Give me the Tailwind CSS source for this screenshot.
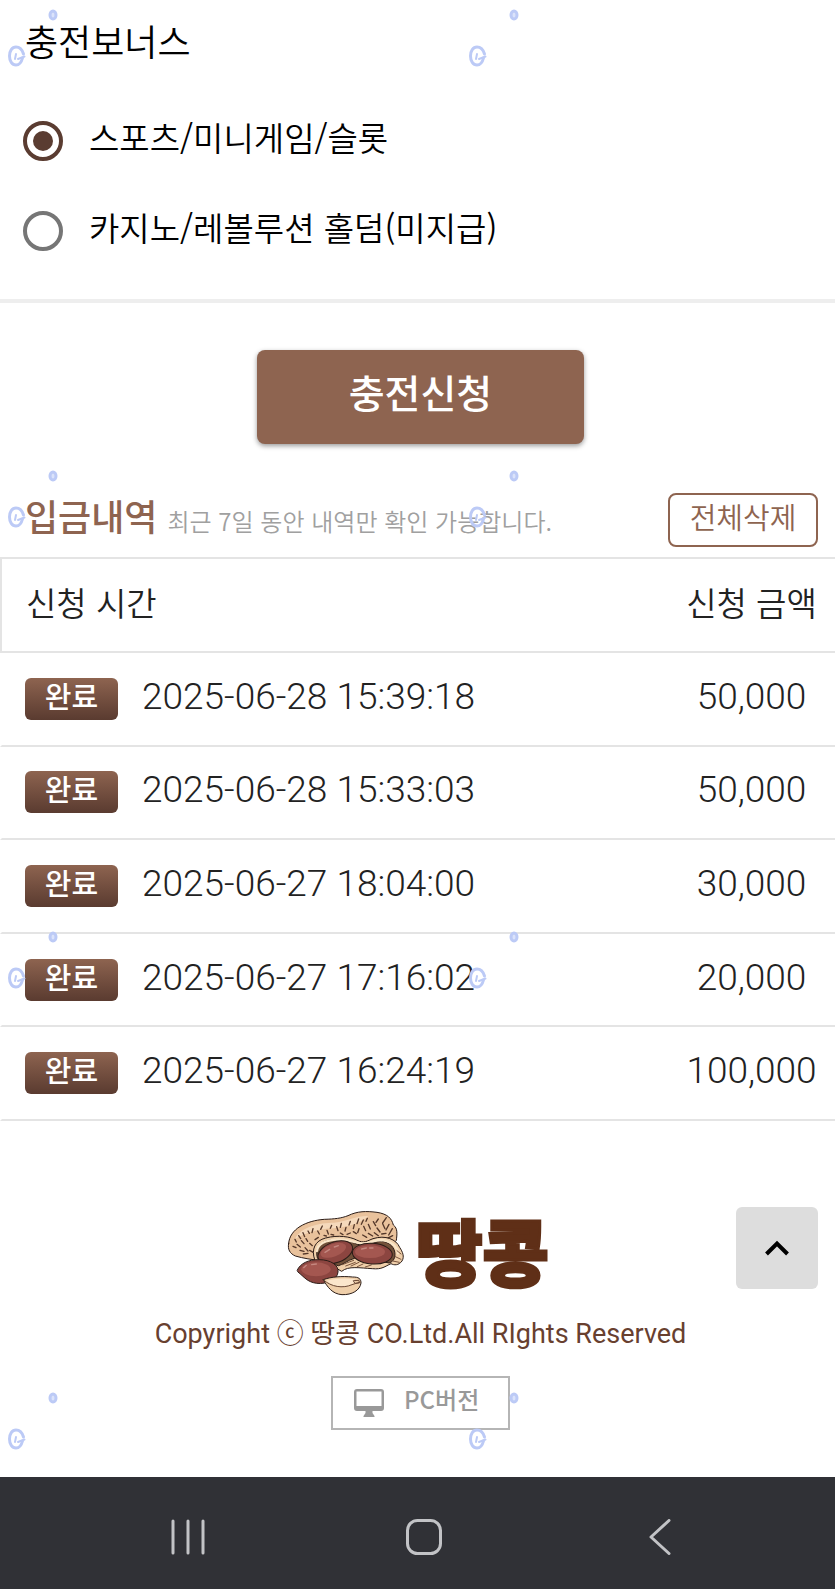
<!DOCTYPE html>
<html lang="ko">
<head>
<meta charset="utf-8">
<meta name="viewport" content="width=device-width, initial-scale=1">
<title>충전신청</title>
<script src="https://cdn.jsdelivr.net/npm/@tailwindcss/browser@4"></script>
</head>
<body class="relative flex min-h-screen flex-col bg-white font-['Noto_Sans_CJK_KR',sans-serif] text-black">
<main class="flex-1">
  <form>
    <fieldset class="border-b-4 border-[#eeeeee] pb-[23px] pt-4">
      <legend class="contents"><span class="mb-8 block px-[25px] text-[36px] font-[350] leading-[48px]">충전보너스</span></legend>
      <label class="flex h-[90px] items-center gap-[26px] px-[23px]">
        <input type="radio" name="bonus" checked class="size-10 shrink-0 appearance-none rounded-full border-4 border-[#767676] bg-clip-content p-[6px] checked:border-[#5a3c31] checked:bg-[#5a3c31]">
        <span class="pb-2 text-[33px] font-[350] leading-[44px]">스포츠/미니게임/슬롯</span>
      </label>
      <label class="flex h-[90px] items-center gap-[26px] px-[23px]">
        <input type="radio" name="bonus" class="size-10 shrink-0 appearance-none rounded-full border-4 border-[#767676] bg-clip-content p-[6px] checked:border-[#5a3c31] checked:bg-[#5a3c31]">
        <span class="pb-2 text-[33px] font-[350] leading-[44px]">카지노/레볼루션 홀덤(미지급)</span>
      </label>
    </fieldset>
    <div class="flex justify-center pb-[49px] pl-[6px] pt-[47px]">
      <button type="submit" class="h-[94px] w-[327px] rounded-lg bg-[#8e6450] pb-3 text-[39px] font-medium text-white shadow-[0_2px_5px_rgba(0,0,0,0.4)]">충전신청</button>
    </div>
  </form>

  <section>
    <div class="flex items-center justify-between pb-[10px] pl-[25px] pr-[17px]">
      <div class="flex items-baseline gap-[10px] pb-2">
        <h2 class="text-[36px] font-medium leading-[45px] text-[#8e6450]">입금내역</h2>
        <p class="text-[24px] font-[350] text-[#a0a0a0]">최근 7일 동안 내역만 확인 가능합니다.</p>
      </div>
      <button type="button" class="h-[54px] w-[150px] rounded-lg border-2 border-[#8e6450] pb-2 text-[29px] font-[350] leading-[40px] text-[#8e6450]">전체삭제</button>
    </div>
    <table class="h-[564px] w-full border-separate border-spacing-0 text-[#222222]">
      <thead>
        <tr class="h-[96px]">
          <th scope="col" class="border-y-2 border-l-2 border-[#e4e4e4] pb-1 pl-6 text-left text-[33px] font-[350]">신청 시간</th>
          <th scope="col" class="w-[167px] border-y-2 border-[#e4e4e4] pb-1 text-center text-[33px] font-[350]">신청 금액</th>
        </tr>
      </thead>
      <tbody class="font-[Roboto,'Noto_Sans_CJK_KR',sans-serif] text-[37px] font-light leading-[44px]">
        <tr>
          <td class="border-b-2 border-l-2 border-b-[#e4e4e4] border-l-transparent p-0 pl-[23px]"><div class="flex items-center gap-6"><span class="flex h-[42px] w-[93px] justify-center rounded-md bg-linear-to-b from-[#8e6450] to-[#5a3b30] font-['Noto_Sans_CJK_KR',sans-serif] text-[29px] font-medium leading-[34px] text-white">완료</span><time class="pb-1">2025-06-28 15:39:18</time></div></td>
          <td class="border-b-2 border-[#e4e4e4] p-0 pb-1 text-center">50,000</td>
        </tr>
        <tr>
          <td class="border-b-2 border-l-2 border-b-[#e4e4e4] border-l-transparent p-0 pl-[23px]"><div class="flex items-center gap-6"><span class="flex h-[42px] w-[93px] justify-center rounded-md bg-linear-to-b from-[#8e6450] to-[#5a3b30] font-['Noto_Sans_CJK_KR',sans-serif] text-[29px] font-medium leading-[34px] text-white">완료</span><time class="pb-1">2025-06-28 15:33:03</time></div></td>
          <td class="border-b-2 border-[#e4e4e4] p-0 pb-1 text-center">50,000</td>
        </tr>
        <tr>
          <td class="border-b-2 border-l-2 border-b-[#e4e4e4] border-l-transparent p-0 pl-[23px]"><div class="flex items-center gap-6"><span class="flex h-[42px] w-[93px] justify-center rounded-md bg-linear-to-b from-[#8e6450] to-[#5a3b30] font-['Noto_Sans_CJK_KR',sans-serif] text-[29px] font-medium leading-[34px] text-white">완료</span><time class="pb-1">2025-06-27 18:04:00</time></div></td>
          <td class="border-b-2 border-[#e4e4e4] p-0 pb-1 text-center">30,000</td>
        </tr>
        <tr>
          <td class="border-b-2 border-l-2 border-b-[#e4e4e4] border-l-transparent p-0 pl-[23px]"><div class="flex items-center gap-6"><span class="flex h-[42px] w-[93px] justify-center rounded-md bg-linear-to-b from-[#8e6450] to-[#5a3b30] font-['Noto_Sans_CJK_KR',sans-serif] text-[29px] font-medium leading-[34px] text-white">완료</span><time class="pb-1">2025-06-27 17:16:02</time></div></td>
          <td class="border-b-2 border-[#e4e4e4] p-0 pb-1 text-center">20,000</td>
        </tr>
        <tr>
          <td class="border-b-2 border-l-2 border-b-[#e4e4e4] border-l-transparent p-0 pl-[23px]"><div class="flex items-center gap-6"><span class="flex h-[42px] w-[93px] justify-center rounded-md bg-linear-to-b from-[#8e6450] to-[#5a3b30] font-['Noto_Sans_CJK_KR',sans-serif] text-[29px] font-medium leading-[34px] text-white">완료</span><time class="pb-1">2025-06-27 16:24:19</time></div></td>
          <td class="border-b-2 border-[#e4e4e4] p-0 pb-1 text-center">100,000</td>
        </tr>
      </tbody>
    </table>
  </section>
</main>

<footer class="relative flex flex-col items-center pb-[47px] pl-[6px] pt-[87px]">
  <a href="#" aria-label="땅콩" class="flex h-[88px] items-center gap-[10px] pr-[6px]">
    <svg class="h-[88px] w-[120px]" viewBox="45 60 360 264" fill="none" stroke="#2b1c17" stroke-width="3" stroke-linecap="round" stroke-linejoin="round" aria-hidden="true">
      <path fill="#e9c29c" d="M53 163C56 120 105 95 160 91C192 90 210 88 231 80C260 66 285 66 318 70C350 75 362 88 367 108C381 118 378 137 376 154L330 200L150 215C125 212 96 208 73 201C57 194 49 181 53 163Z"/>
      <path stroke="none" fill="#f5d9bb" d="M72 150C90 113 145 101 190 101C230 97 255 80 292 81C270 103 230 113 190 118C140 119 100 134 72 150Z"/>
      <path stroke="#54382a" stroke-width="4" d="M72 151l4 8M83 140l6 9M96 131l5 12M111 126l4 7M126 119l-3 12M140 126l5 9M154 111l-5 10M168 124l4 11M182 109l-4 9M197 113l4 12M211 103l-3 12M225 115l-3 11M238 97l-4 11M250 107l-3 12M263 90l-5 14M277 93l-6 13M289 88l-4 9M66 172l9 4M78 166l10 8M91 155l8 9M105 149l5 8M116 163l8 7M87 184l12 3M102 176l9 10M116 184l12 7M142 145l-10 7M159 139l7 2M180 136l8 2M208 132l8 5M228 136l10-4M247 128l9 6M264 119l-4 12M278 112l6 13M292 106l6 14M307 98l7 12M318 117l9 12M335 104l7 15M332 135l13-2M346 86l-11 16M354 106l-9 17M364 119l-11 19M310 131l12 9M292 133l13 8M275 138l12 7M322 90l-7 10M365 140l-16 8M97 195l14-2"/>
      <path fill="#efcfaa" d="M131 212C120 181 132 155 164 147C202 137 237 143 257 153C279 165 289 155 306 149C343 137 376 151 386 175C395 189 401 203 393 216C383 230 369 229 360 224C342 232 333 242 304 239C267 237 232 230 212 247L198 239Z"/>
      <path fill="#705039" d="M139 207C132 179 144 161 173 154C209 148 240 157 259 166C290 172 304 159 332 157C358 159 372 178 372 196C372 211 363 220 354 222C320 213 278 216 250 208C228 215 216 227 203 230Z"/>
      <path stroke="#f9e6c9" stroke-width="7" d="M138 186C140 161 172 153 201 151C230 151 248 160 270 163C292 166 304 154 326 153C359 153 379 173 381 193"/>
      <path stroke="#7a543d" d="M214 227l34-13M224 231l29-11M240 231l24-11M259 233l17-8M283 234l18-6M378 185l12 10M373 203l17 8M365 216l20 4M338 162l19 8"/>
      <g fill="#8c4540" stroke-width="3">
        <ellipse cx="193" cy="190" rx="54" ry="31" transform="rotate(-20 193 190)"/>
        <ellipse cx="304" cy="194" rx="60" ry="31" transform="rotate(4 304 194)"/>
        <path d="M79 243C87 224 112 211 145 212C179 212 204 229 201 249C199 273 168 286 137 283C108 279 100 264 81 249Z"/>
      </g>
      <g stroke="none" fill="#a45750">
        <ellipse cx="187" cy="184" rx="40" ry="19" transform="rotate(-20 187 184)"/>
        <ellipse cx="297" cy="188" rx="45" ry="19"/>
        <ellipse cx="135" cy="241" rx="44" ry="21"/>
      </g>
      <path stroke="#c48880" stroke-width="4" d="M162 190l14-9M190 174l12-4M272 180l14-3M296 177h10M98 236l8-7M122 227l14-2"/>
      <path fill="#efcfaa" d="M157 272C180 263 214 261 245 264C263 264 270 269 270 282C267 304 243 318 213 317C184 315 169 294 157 272Z"/>
      <path stroke="none" fill="#fbe6cc" d="M166 275C194 268 225 267 249 270C258 275 249 286 227 291C200 295 182 289 166 275Z"/>
      <path stroke="#6b4a38" d="M158 273C180 294 216 299 243 287L268 279M248 275l16-1 1 8-12 1Z"/>
    </svg>
    <span class="pb-2 text-[72px] font-black leading-[80px] text-[#5f2f17] [-webkit-text-stroke:3px_#5f2f17]">땅콩</span>
  </a>
  <p class="mt-[19px] font-[Roboto,'Noto_Sans_CJK_KR',sans-serif] text-[27px] leading-[36px] text-[#68402f]">Copyright ⓒ 땅콩 CO.Ltd.All RIghts Reserved</p>
  <a href="#" class="mt-6 flex h-[54px] w-[179px] items-center gap-5 border-2 border-[#b5b5b5] pl-[21px] text-[#999999]">
    <svg class="h-[28px] w-[30px]" viewBox="0 0 30 28" fill="currentColor" aria-hidden="true"><path fill-rule="evenodd" d="M3 0H27A3 3 0 0 1 30 3V19A3 3 0 0 1 27 22H18.500V24L20.500 27V28H9.500V27L11.500 24V22H3A3 3 0 0 1 0 19V3A3 3 0 0 1 3 0ZM2.500 2.500V17H27.500V2.500Z"/></svg>
    <span class="pb-2 text-[24px] font-medium leading-[36px]">PC버전</span>
  </a>
  <button type="button" aria-label="맨 위로" class="absolute right-[17px] top-[85px] flex size-[82px] items-center justify-center rounded-md bg-[#dddddd]">
    <svg class="h-[16px] w-[24px]" viewBox="0 0 24 16" fill="none" stroke="#000" stroke-width="4" aria-hidden="true"><path d="M1.500 14 12 3.500 22.500 14"/></svg>
  </button>
</footer>

<nav class="flex h-[112px] items-center justify-center gap-[200px] bg-[#303136] pl-[13px] pt-2 text-[#c2c3c6]">
  <button type="button" aria-label="최근 앱"><svg class="size-9" viewBox="0 0 36 36" fill="none" stroke="currentColor" stroke-width="3" stroke-linecap="round" aria-hidden="true"><path d="M3 2V34M18 2V34M33 2V34"/></svg></button>
  <button type="button" aria-label="홈"><svg class="size-9" viewBox="0 0 36 36" fill="none" stroke="currentColor" stroke-width="3" aria-hidden="true"><rect x="1.500" y="1.500" width="33" height="33" rx="10"/></svg></button>
  <button type="button" aria-label="뒤로"><svg class="size-9" viewBox="0 0 36 36" fill="none" stroke="currentColor" stroke-width="3" stroke-linecap="round" stroke-linejoin="round" aria-hidden="true"><path d="M27 1.500 9 18 27 34.500"/></svg></button>
</nav>

<!-- Repeating watermark over the page content -->
<svg class="pointer-events-none absolute inset-0 size-full" aria-hidden="true">
  <defs>
    <pattern id="mark" width="461" height="461" patternUnits="userSpaceOnUse">
      <g fill="none" stroke="#bccaf6" stroke-linecap="round">
        <path stroke-width="3" d="M23.500 54C22 49 19 47 16 47C12 47 9.500 51 9.500 56C9.500 61 12 65 16 65C19.500 65 21.500 62 22.500 58"/>
        <path stroke-width="2" d="M16 54L15 59M18 59L24.500 56.500"/>
        <ellipse cx="53" cy="15" rx="3" ry="4" stroke-width="3" fill="#dbe3fb"/>
      </g>
    </pattern>
  </defs>
  <rect width="100%" height="100%" fill="url(#mark)"/>
</svg>
</body>
</html>
